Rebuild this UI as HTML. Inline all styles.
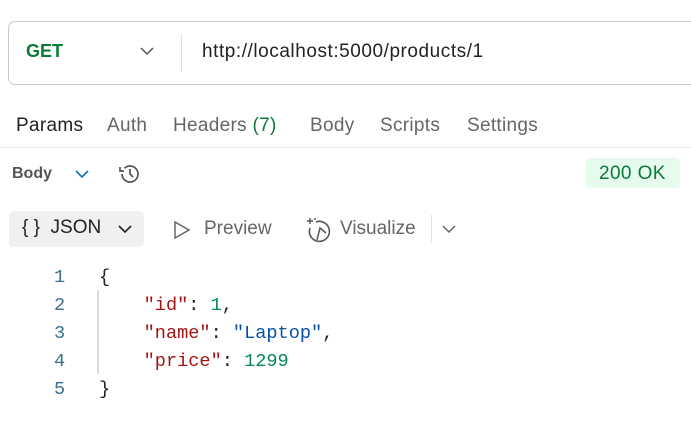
<!DOCTYPE html><html><head><style>
body{margin:0;width:691px;height:425px;background:#fff;font-family:"Liberation Sans",sans-serif;position:relative;overflow:hidden}
.a{position:absolute;white-space:nowrap}
.mono{font-family:"Liberation Mono",monospace;font-size:18.6px}
.t{font-size:19px;letter-spacing:0.3px;top:115px}
</style></head><body>
<div class="a" style="left:8px;top:21px;width:700px;height:62px;border:1px solid #c8c8c8;border-radius:7px"></div>
<div class="a" style="left:26px;top:41px;font-size:18px;font-weight:bold;color:#0b7a3a">GET</div>
<svg class="a" style="left:140px;top:46px" width="14" height="10"><path d="M1 2l6 6 6-6" fill="none" stroke="#555" stroke-width="1.5"/></svg>
<div class="a" style="left:181px;top:34px;width:1px;height:38px;background:#ddd"></div>
<div class="a" style="left:202px;top:41px;font-size:19px;letter-spacing:0.55px;color:#222">http://localhost:5000/products/1</div>
<div class="a t" style="left:16px;color:#222">Params</div>
<div class="a t" style="left:107px;color:#666">Auth</div>
<div class="a t" style="left:173px;color:#666">Headers <span style="color:#0b7a3a">(7)</span></div>
<div class="a t" style="left:310px;color:#666">Body</div>
<div class="a t" style="left:380px;color:#666">Scripts</div>
<div class="a t" style="left:467px;color:#666">Settings</div>
<div class="a" style="left:0;top:147px;width:691px;height:1px;background:#e6e6e6"></div>
<div class="a" style="left:12px;top:165px;font-size:16px;font-weight:bold;color:#555">Body</div>
<svg class="a" style="left:75px;top:169px" width="14" height="10"><path d="M1 2l6 6 6-6" fill="none" stroke="#1a6bb5" stroke-width="1.6"/></svg>
<svg class="a" style="left:117px;top:161px" width="26" height="26" viewBox="0 0 26 26"><path d="M5 13a8 8 0 1 0 2.5-5.8" fill="none" stroke="#555" stroke-width="1.7"/><path d="M3 6v4h4" fill="none" stroke="#555" stroke-width="1.7"/><path d="M13 8v5l3 3" fill="none" stroke="#555" stroke-width="1.7"/></svg>
<div class="a" style="left:586px;top:158px;width:94px;height:30px;background:#e6fbee;border-radius:4px"></div>
<div class="a" style="left:599px;top:163px;font-size:19px;letter-spacing:0.4px;color:#0b7a3a">200 OK</div>
<div class="a" style="left:9px;top:211px;width:135px;height:36px;background:#f0f0f0;border-radius:5px"></div>
<div class="a" style="left:22px;top:217px;font-size:19px;color:#222">{ }&nbsp; JSON</div>
<svg class="a" style="left:118px;top:224px" width="14" height="10"><path d="M1 2l6 6 6-6" fill="none" stroke="#222" stroke-width="1.6"/></svg>
<svg class="a" style="left:173px;top:220px" width="18" height="20"><path d="M2 2l14 8-14 8z" fill="none" stroke="#666" stroke-width="1.5"/></svg>
<div class="a" style="left:204px;top:218px;font-size:19px;color:#666">Preview</div>
<svg class="a" style="left:304px;top:216px" width="28" height="28" viewBox="0 0 28 28"><path d="M12 6a10 10 0 1 1-6 6" fill="none" stroke="#555" stroke-width="1.6"/><path d="M13 24l3-12 6 5" fill="none" stroke="#555" stroke-width="1.5"/><path d="M6 2v6M3 5h6M11 2v2" stroke="#555" stroke-width="1.4"/></svg>
<div class="a" style="left:340px;top:218px;font-size:19px;color:#666">Visualize</div>
<div class="a" style="left:431px;top:215px;width:1px;height:28px;background:#e0e0e0"></div>
<svg class="a" style="left:442px;top:224px" width="14" height="10"><path d="M1 2l6 6 6-6" fill="none" stroke="#666" stroke-width="1.5"/></svg>
<div class="a" style="left:97px;top:290px;width:2px;height:84px;background:#ddd"></div>
<div class="a mono" style="left:54px;top:264px;line-height:28px;color:#3a6f8a">1<br>2<br>3<br>4<br>5</div>
<div class="a mono" style="left:99px;top:264px;line-height:28px;color:#222">{<br>&nbsp;&nbsp;&nbsp;&nbsp;<span style="color:#a31515">"id"</span>: <span style="color:#098658">1</span>,<br>&nbsp;&nbsp;&nbsp;&nbsp;<span style="color:#a31515">"name"</span>: <span style="color:#0451a5">"Laptop"</span>,<br>&nbsp;&nbsp;&nbsp;&nbsp;<span style="color:#a31515">"price"</span>: <span style="color:#098658">1299</span><br>}</div>
</body></html>
